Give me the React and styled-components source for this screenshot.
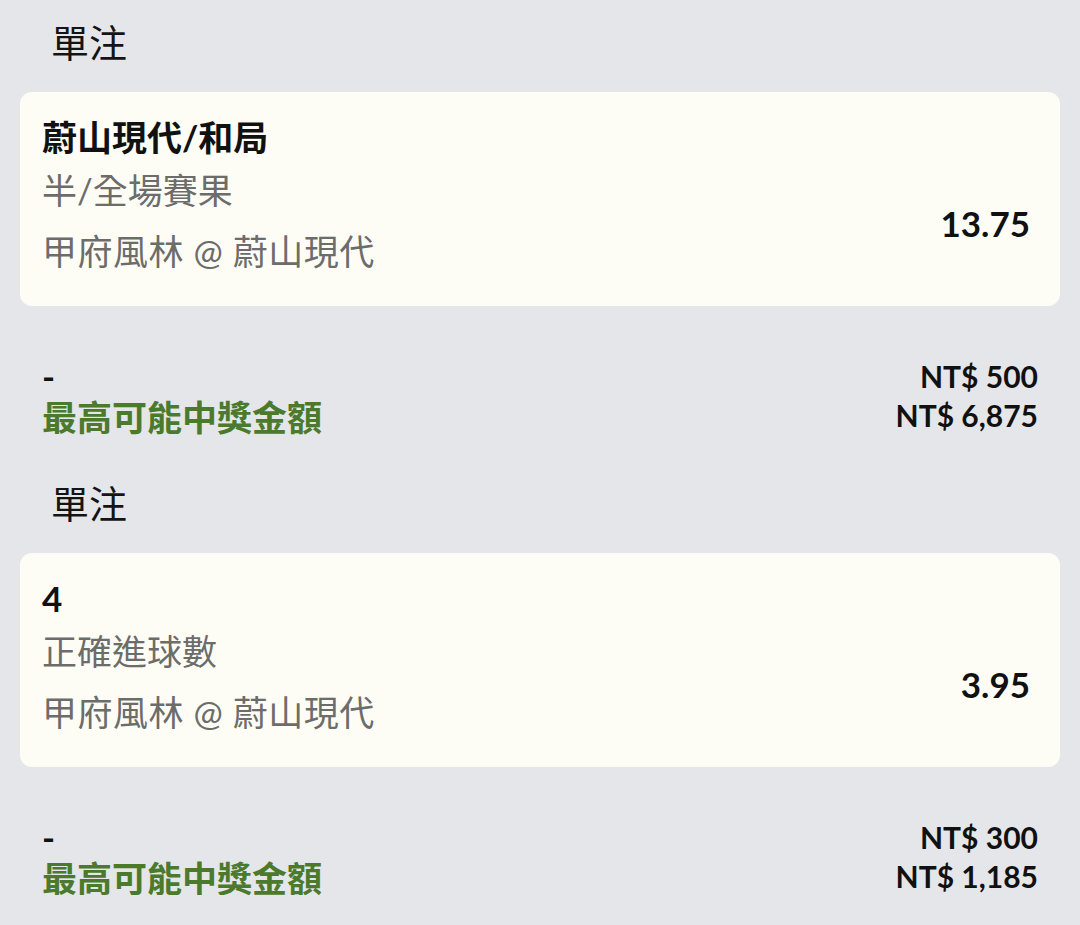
import React from 'react';
import styled, { createGlobalStyle } from 'styled-components';

const GlobalStyle = createGlobalStyle`
  html, body {
    margin: 0;
    padding: 0;
    background: #e5e6e9;
  }
  body {
    font-family: Lato, "Noto Sans CJK TC", sans-serif;
    color: #141414;
  }
`;

const Page = styled.div`
  padding-top: 17px;
  display: flex;
  flex-direction: column;
`;

const Section = styled.section`
  display: flex;
  flex-direction: column;
  & + & {
    margin-top: 44px;
  }
`;

const Heading = styled.div`
  padding-left: 51px;
  font-size: 38px;
  line-height: 50px;
  font-weight: 400;
  color: #141414;
`;

const Card = styled.div`
  margin: 25px 20px 0;
  height: 214px;
  box-sizing: border-box;
  padding: 18px 30px 0 22px;
  background: #fdfdf6;
  border-radius: 12px;
  display: flex;
  align-items: center;
`;

const Details = styled.div`
  flex: 1;
  align-self: flex-start;
  display: flex;
  flex-direction: column;
`;

const Selection = styled.div`
  font-size: 35px;
  line-height: 54px;
  font-weight: 700;
  color: #111;
`;

const Market = styled.div`
  font-size: 35px;
  line-height: ${(p) => p.$lh || 52}px;
  margin-top: ${(p) => p.$gap || 0}px;
  letter-spacing: ${(p) => p.$spread || 0}px;
  color: #6c6c6a;
`;

const Odds = styled.div`
  margin-top: 30px;
  font-size: 35px;
  font-weight: 700;
  color: #111;
`;

const Summary = styled.div`
  margin-top: 50px;
  padding: 0 42px;
  display: grid;
  grid-template-columns: 1fr auto;
  grid-template-rows: 40px 38px;
  align-items: center;
`;

const Label = styled.div`
  font-size: 35px;
  font-weight: 700;
  color: ${(p) => (p.$green ? '#4b7a2d' : '#111')};
`;

const Amount = styled.div`
  font-size: 30px;
  font-weight: 700;
  text-align: right;
  color: #111;
`;

const bets = [
  {
    selection: '蔚山現代/和局',
    market: '半/全場賽果',
    event: '甲府風林 @ 蔚山現代',
    odds: '13.75',
    stake: 'NT$ 500',
    payout: 'NT$ 6,875',
  },
  {
    selection: '4',
    market: '正確進球數',
    event: '甲府風林 @ 蔚山現代',
    odds: '3.95',
    stake: 'NT$ 300',
    payout: 'NT$ 1,185',
  },
];

const BetSlip = ({ bet }) => (
  <Section>
    <Heading>單注</Heading>
    <Card>
      <Details>
        <Selection>{bet.selection}</Selection>
        <Market>{bet.market}</Market>
        <Market $gap={8} $lh={54} $spread={0.5}>{bet.event}</Market>
      </Details>
      <Odds>{bet.odds}</Odds>
    </Card>
    <Summary>
      <Label>-</Label>
      <Amount>{bet.stake}</Amount>
      <Label $green>最高可能中獎金額</Label>
      <Amount>{bet.payout}</Amount>
    </Summary>
  </Section>
);

export default function App() {
  return (
    <>
      <GlobalStyle />
      <Page>
        {bets.map((bet) => (
          <BetSlip key={bet.odds} bet={bet} />
        ))}
      </Page>
    </>
  );
}
